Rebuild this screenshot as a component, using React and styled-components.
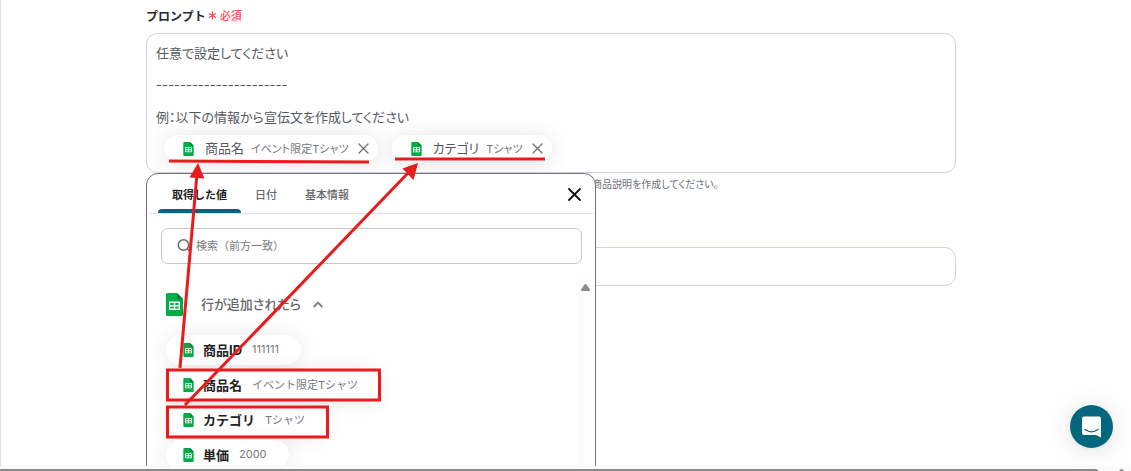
import React from "react";
import styled, { createGlobalStyle } from "styled-components";

const GlobalStyle = createGlobalStyle`
  * { box-sizing: border-box; }
  body {
    margin: 0;
    background: #fff;
    color: #55585d;
    font-family: Inter, "Noto Sans CJK JP", sans-serif;
    font-size: 13px;
    font-feature-settings: "palt";
    overflow: hidden;
  }
  button, input {
    font: inherit;
    font-feature-settings: inherit;
    color: inherit;
  }
`;

const Page = styled.div`
  display: flex;
  flex-direction: column;
  height: 100vh;
  position: relative;
`;

const Main = styled.main`
  flex: 1;
  min-height: 0;
  overflow: hidden;
  border-left: 1px solid #dedede;
  padding: 5px 175px 0 145px;
`;

const FieldLabel = styled.div`
  display: flex;
  align-items: center;
  gap: 2px;
  height: 20px;
  margin-bottom: 8px;
  font-size: 12px;
  font-weight: 700;
  font-feature-settings: normal;
  color: #26282c;
`;

const Required = styled.span`
  display: inline-flex;
  align-items: center;
  gap: 3px;
  font-size: 11px;
  font-weight: 500;
  color: #fb4a5e;
`;

const PromptWrap = styled.div`
  position: relative;
`;

const PromptBox = styled.div`
  min-height: 140px;
  padding: 9px 9px 10px;
  border: 1px solid #cfd2da;
  border-radius: 11px;
  background: #fff;
  overflow: hidden;
`;

const Lines = styled.div`
  display: flex;
  flex-direction: column;
  gap: 12px;
  margin-bottom: 8px;
`;

const Line = styled.p`
  margin: 0;
  line-height: 20px;
`;

const InlineChips = styled.div`
  display: flex;
  gap: 14px;
  padding-left: 8px;
`;

const InlineChip = styled.span`
  display: flex;
  align-items: center;
  height: 27px;
  padding: 0 9px 0 19px;
  border-radius: 14px;
  background: #fff;
  box-shadow: 0 2px 20px rgba(0, 0, 0, 0.12);
`;

const ChipName = styled.span`
  margin-left: ${(p) => (p.$bold ? 9 : 11)}px;
  padding-bottom: 2px;
  font-size: 13px;
  font-weight: ${(p) => (p.$bold ? 700 : 400)};
  color: ${(p) => (p.$bold ? "#222" : "#55585d")};
  white-space: nowrap;
`;

const ChipValue = styled.span`
  margin-left: ${(p) => (p.$wide ? 10 : 7)}px;
  padding-bottom: 2px;
  font-size: 11px;
  color: #77797c;
  white-space: nowrap;
`;

const IconButton = styled.button`
  display: flex;
  padding: 0;
  border: 0;
  background: none;
  cursor: pointer;
  color: ${(p) => p.$color};
  margin-left: ${(p) => p.$gap}px;
`;

const Helper = styled.p`
  margin: 2px 0 53px;
  padding-left: 446px;
  font-size: 10px;
  line-height: 19px;
  color: #6c7178;
  white-space: nowrap;
`;

const TextField = styled.input`
  display: block;
  width: 100%;
  height: 39px;
  padding: 0 9px;
  border: 1px solid #cfd2da;
  border-radius: 11px;
  outline: none;
`;

const Popover = styled.section`
  position: absolute;
  top: 100%;
  left: 0;
  z-index: 1;
  width: 450px;
  height: 340px;
  padding: 0 2px 0 3px;
  border: 1px solid #6f7276;
  border-radius: 12px;
  background: #fff;
  font-feature-settings: normal;
`;

const TabBar = styled.div`
  display: flex;
  height: 40px;
  padding: 0 12px 0 8px;
  border-bottom: 1px solid #e0e1e2;
`;

const Tab = styled.button`
  position: relative;
  padding: 0 14px;
  border: 0;
  background: none;
  font-size: 11px;
  font-weight: ${(p) => (p.$active ? 700 : 500)};
  color: ${(p) => (p.$active ? "#222" : "#66686b")};
  cursor: pointer;
  white-space: nowrap;

  &::after {
    content: "";
    display: ${(p) => (p.$active ? "block" : "none")};
    position: absolute;
    inset: auto 0 0;
    height: 4px;
    border-radius: 4px 4px 0 0;
    background: #05677e;
  }
`;

const CloseSlot = styled.div`
  display: flex;
  align-items: center;
  margin-left: auto;
  padding-top: 2px;
`;

const Search = styled.label`
  display: flex;
  align-items: center;
  gap: 5px;
  height: 36px;
  margin: 14px 11px 15px;
  padding: 0 15px;
  border: 1px solid #c4c6c8;
  border-radius: 7px;
  color: #66686b;
`;

const SearchInput = styled.input`
  flex: 1;
  border: 0;
  padding: 0;
  outline: none;
  background: none;
  font-size: 11px;

  &::placeholder {
    color: #77797c;
    opacity: 1;
  }
`;

const Results = styled.div`
  display: flex;
  height: 300px;
`;

const Groups = styled.div`
  flex: 1;
  padding: 9px 0 0 16px;
`;

const GroupHeader = styled.button`
  display: flex;
  align-items: center;
  height: 32px;
  margin-bottom: 15px;
  padding: 0;
  border: 0;
  background: none;
  font-size: 13px;
  font-weight: 500;
  font-feature-settings: "palt";
  color: #66686b;
  cursor: pointer;
`;

const GroupTitle = styled.span`
  margin: 0 12px 0 18px;
  padding-bottom: 2px;
`;

const Options = styled.div`
  display: flex;
  flex-direction: column;
  align-items: flex-start;
  gap: 5px;
`;

const Option = styled.button`
  display: flex;
  align-items: center;
  height: 30px;
  padding: 0 22px 0 17px;
  border: 0;
  border-radius: 15px;
  background: #fff;
  box-shadow: 0 2px 20px rgba(0, 0, 0, 0.1);
  cursor: pointer;
`;

const ListScroll = styled.div`
  display: flex;
  justify-content: center;
  width: 15px;
  padding-top: 5px;
  background: #fcfcfc;
`;

const PageScroll = styled.div`
  display: flex;
  height: 5px;
  padding-top: 3px;
  gap: 20px;
  background: #fafafa;
`;

const PageThumb = styled.div`
  flex: 1;
  background: #8b8b8b;
  border-radius: 0 2px 0 0;
`;

const PageArrow = styled.svg`
  margin-right: 6px;
`;

const Messenger = styled.button`
  position: fixed;
  right: 18px;
  bottom: 23px;
  display: flex;
  align-items: center;
  justify-content: center;
  width: 43px;
  height: 43px;
  padding: 0;
  border: 0;
  border-radius: 50%;
  background: #05677e;
  box-shadow: 0 1px 5px rgba(0, 0, 0, 0.06), 0 2px 26px rgba(0, 0, 0, 0.13);
  cursor: pointer;
`;

const Annotations = styled.svg`
  position: absolute;
  top: 0;
  left: 0;
  z-index: 2;
  pointer-events: none;
`;

const SheetIcon = ({ width = 11, height = 14 }) => (
  <svg width={width} height={height} viewBox="0 0 17 23" aria-hidden="true">
    <path d="M1.500 0H11l6 6v15.500a1.500 1.500 0 0 1-1.500 1.500h-14A1.500 1.500 0 0 1 0 21.500v-20A1.500 1.500 0 0 1 1.500 0Z" fill="#00ac47" />
    <path d="M11 0l6 6h-4.500A1.500 1.500 0 0 1 11 4.500Z" fill="#007c35" />
    <path d="M3 8.500h11v8.500H3Zm1.400 1.400v2.100h3.400v-2.100Zm4.800 0v2.100h3.400v-2.100Zm-4.800 3.500v2.200h3.400v-2.200Zm4.800 0v2.200h3.400v-2.200Z" fill="#fff" fillRule="evenodd" />
  </svg>
);

const Cross = ({ size, stroke }) => (
  <svg width={size} height={size} viewBox={`0 0 ${size} ${size}`} fill="none" stroke="currentColor" strokeWidth={stroke} strokeLinecap="round" aria-hidden="true">
    <path d={`M1 1L${size - 1} ${size - 1}M${size - 1} 1L1 ${size - 1}`} />
  </svg>
);

const selected = [
  { name: "商品名", value: "イベント限定Tシャツ" },
  { name: "カテゴリ", value: "Tシャツ" },
];

const options = [
  { name: "商品ID", value: "111111" },
  { name: "商品名", value: "イベント限定Tシャツ" },
  { name: "カテゴリ", value: "Tシャツ" },
  { name: "単価", value: "2000" },
];

const tabs = ["取得した値", "日付", "基本情報"];

export default function App() {
  return (
    <Page lang="ja">
      <GlobalStyle />
      <Main>
        <FieldLabel id="prompt-label">
          プロンプト
          <Required>
            <svg width="9" height="9" viewBox="0 0 9 9" stroke="currentColor" strokeWidth="1.3" aria-hidden="true">
              <path d="M4.500 0.500V8.500M1 2.500L8 6.500M8 2.500L1 6.500" />
            </svg>
            必須
          </Required>
        </FieldLabel>
        <PromptWrap>
          <PromptBox role="textbox" aria-multiline="true" aria-labelledby="prompt-label" tabIndex={0}>
            <Lines>
              <Line>任意で設定してください</Line>
              <Line>----------------------</Line>
              <Line>例：以下の情報から宣伝文を作成してください</Line>
            </Lines>
            <InlineChips>
              {selected.map((s) => (
                <InlineChip key={s.name}>
                  <SheetIcon />
                  <ChipName>{s.name}</ChipName>
                  <ChipValue>{s.value}</ChipValue>
                  <IconButton $color="#707275" $gap={9} aria-label={`${s.name}を削除`}>
                    <Cross size={11} stroke={1.3} />
                  </IconButton>
                </InlineChip>
              ))}
            </InlineChips>
          </PromptBox>
          <Popover>
            <TabBar role="tablist">
              {tabs.map((t, i) => (
                <Tab key={t} role="tab" aria-selected={i === 0} $active={i === 0}>{t}</Tab>
              ))}
              <CloseSlot>
                <IconButton $color="#111" $gap={0} aria-label="閉じる">
                  <Cross size={13} stroke={1.8} />
                </IconButton>
              </CloseSlot>
            </TabBar>
            <Search>
              <svg width="14" height="14" viewBox="0 0 14 14" fill="none" stroke="currentColor" strokeWidth="1.5" aria-hidden="true">
                <circle cx="6.500" cy="6" r="5.200" />
                <path d="M10.300 9.800L13.500 13" />
              </svg>
              <SearchInput placeholder="検索（前方一致）" aria-label="検索" />
            </Search>
            <Results>
              <Groups>
                <GroupHeader aria-expanded="true">
                  <SheetIcon width={17} height={23} />
                  <GroupTitle>行が追加されたら</GroupTitle>
                  <svg width="10" height="7" viewBox="0 0 10 7" fill="none" stroke="#808285" strokeWidth="1.900" aria-hidden="true">
                    <path d="M0.700 6L5 1.600L9.300 6" />
                  </svg>
                </GroupHeader>
                <Options>
                  {options.map((o) => (
                    <Option key={o.name}>
                      <SheetIcon />
                      <ChipName $bold>{o.name}</ChipName>
                      <ChipValue $wide>{o.value}</ChipValue>
                    </Option>
                  ))}
                </Options>
              </Groups>
              <ListScroll>
                <svg width="9" height="7" viewBox="0 0 9 7" aria-hidden="true">
                  <path d="M3.500 0.500Q4.500-0.300 5.500 0.500L9 5.500Q9 7 8 7H1Q0 7 0 5.500Z" fill="#8b8b8b" />
                </svg>
              </ListScroll>
            </Results>
          </Popover>
        </PromptWrap>
        <Helper>商品説明を作成してください。</Helper>
        <TextField aria-label="入力欄" />
      </Main>
      <PageScroll>
        <PageThumb />
        <PageArrow width="7" height="2" viewBox="0 0 7 2" aria-hidden="true">
          <path d="M1 2L3 0H4L6 2Z" fill="#8b8b8b" />
        </PageArrow>
      </PageScroll>
      <Messenger aria-label="メッセージを開く">
        <svg width="19" height="22" viewBox="0 0 19 22" aria-hidden="true">
          <path d="M2 0.500H17Q19 0.500 19 2.500V21.500L14 19H2Q0 19 0 17V2.500Q0 0.500 2 0.500Z" fill="#fff" />
          <path d="M3 13.500Q9.500 18.200 16 13.500" fill="none" stroke="#05677e" strokeWidth="1.300" strokeLinecap="round" />
        </svg>
      </Messenger>
      <Annotations width="600" height="450" viewBox="0 0 600 450" fill="none" stroke="#e81c1c" strokeWidth="3" aria-hidden="true">
        <path d="M169 161L369 162M395 159H545" />
        <path d="M180 368L196.800 176M185 405L408 173" />
        <path d="M198 163L204.500 178.500L189.500 177.500ZM418 163L413.500 180L402.500 168.500Z" fill="#e81c1c" stroke="none" />
        <rect x="167.500" y="370" width="212" height="30" />
        <rect x="167.500" y="407" width="160" height="30" />
      </Annotations>
    </Page>
  );
}
